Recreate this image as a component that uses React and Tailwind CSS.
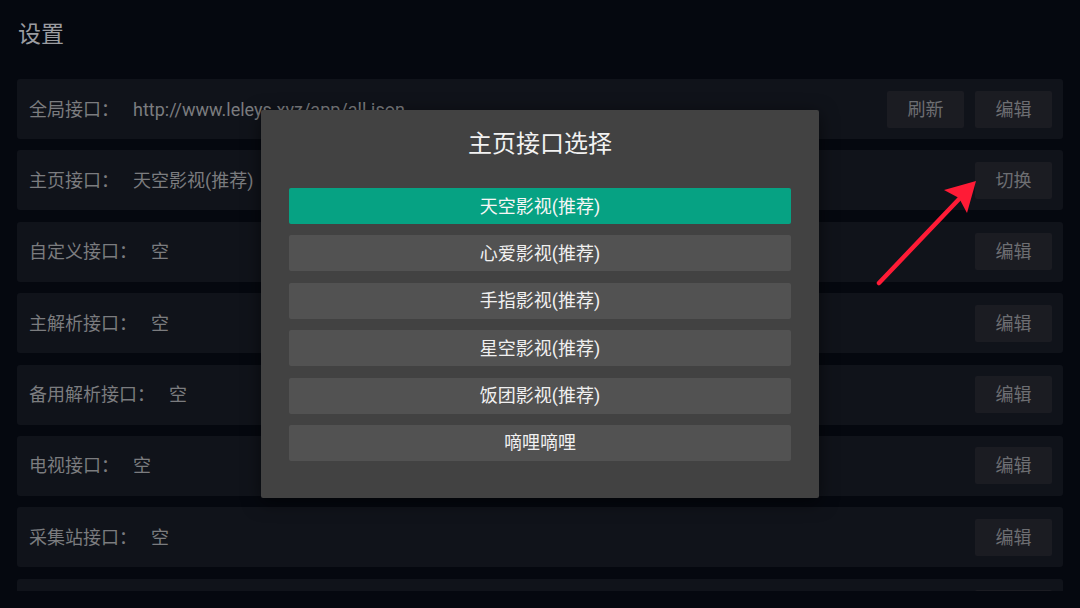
import React from 'react';

const rows = [
  { label: '全局接口：', value: 'http://www.leleys.xyz/app/all.json', actions: ['刷新', '编辑'] },
  { label: '主页接口：', value: '天空影视(推荐)', actions: ['切换'] },
  { label: '自定义接口：', value: '空', actions: ['编辑'] },
  { label: '主解析接口：', value: '空', actions: ['编辑'] },
  { label: '备用解析接口：', value: '空', actions: ['编辑'] },
  { label: '电视接口：', value: '空', actions: ['编辑'] },
  { label: '采集站接口：', value: '空', actions: ['编辑'] },
  // next row only peeks in above the fold
  { label: '', value: '', actions: [''] },
];

const sources = ['天空影视(推荐)', '心爱影视(推荐)', '手指影视(推荐)', '星空影视(推荐)', '饭团影视(推荐)', '嘀哩嘀哩'];

const font = { fontFamily: "Roboto, 'Noto Sans CJK SC', sans-serif" };

function SettingRow({ label, value, actions }) {
  return (
    <div className="h-[60px] shrink-0 rounded-[3px] bg-[#10131a] flex items-center pl-[12px] pr-[11px]">
      <span className="text-[18px] text-[#7b7c7f] whitespace-nowrap">{label}</span>
      <span className="ml-[14px] text-[18px] text-[#7b7c7f] whitespace-nowrap">{value}</span>
      <div className="ml-auto flex gap-[11px]">
        {actions.map((a, i) => (
          <button key={i} className="w-[77px] h-[37px] rounded-[2px] bg-[#1b1c22] text-[18px] text-[#6d6e72]">{a}</button>
        ))}
      </div>
    </div>
  );
}

export default function App() {
  const selected = 0;
  return (
    <div className="relative w-[1080px] h-[608px] overflow-hidden bg-[#05080f]" style={font}>
      <div className="px-[17px]">
        <h1 className="pt-[21px] pl-[1px] mb-[30px] text-[23px] leading-[28px] text-[#9b9ca0]">设置</h1>
        <div className="h-[512px] overflow-hidden flex flex-col gap-[11.4px]">
          {rows.map((r, i) => <SettingRow key={i} {...r} />)}
        </div>
      </div>

      {/* source picker dialog */}
      <div className="absolute left-[261px] top-[110px] w-[558px] h-[388px] rounded-[2px] bg-[#424242] shadow-[0_4px_18px_rgba(0,0,0,0.55)]">
        <h2 className="pt-[18px] text-center text-[24px] leading-[32px] text-[#f2f2f2]">主页接口选择</h2>
        <div className="mt-[28px] px-[28px] flex flex-col gap-[11.4px]">
          {sources.map((s, i) => (
            <div
              key={s}
              className={i === selected
                ? 'h-[36px] rounded-[2px] bg-[#06a283] flex items-center justify-center text-[18px] text-[#f6f6f6]'
                : 'h-[36px] rounded-[2px] bg-[#525252] flex items-center justify-center text-[18px] text-[#f0f0f0]'}
            >
              {s}
            </div>
          ))}
        </div>
      </div>

      {/* red pointer */}
      <svg className="absolute left-0 top-0" width="1080" height="608" viewBox="0 0 1080 608">
        <line x1="879" y1="283" x2="961" y2="197" stroke="#ff1b36" strokeWidth="4.5" strokeLinecap="round" />
        <polygon points="976,181 944,190 959,198 967,213" fill="#ff1b36" />
      </svg>
    </div>
  );
}
